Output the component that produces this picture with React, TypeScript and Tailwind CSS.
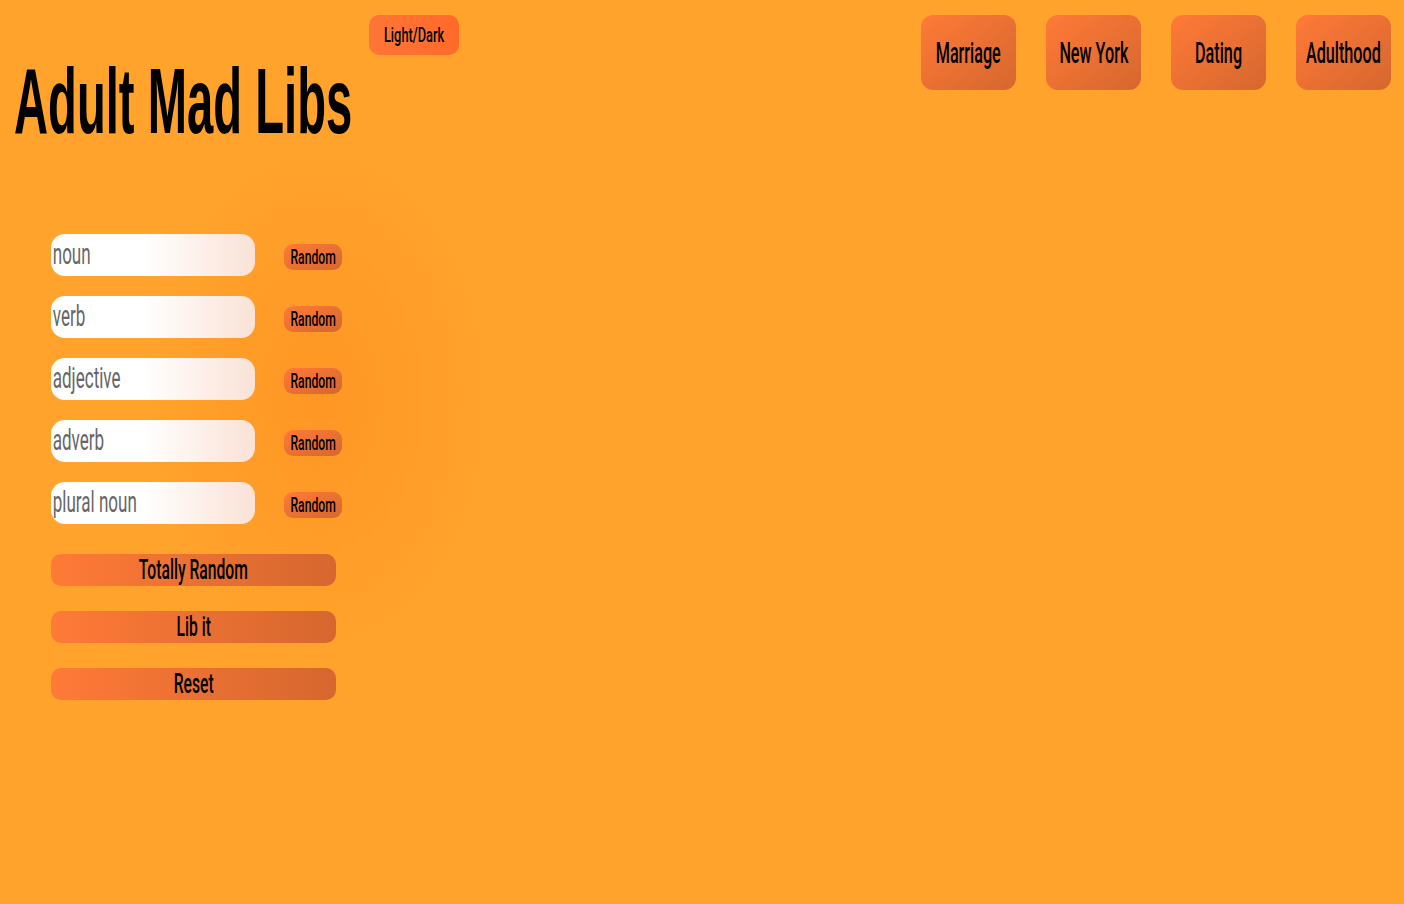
import { useState } from 'react';

const fields = ['noun', 'verb', 'adjective', 'adverb', 'plural noun'];
const stories = ['Marriage', 'New York', 'Dating', 'Adulthood'];
const actions = ['Totally Random', 'Lib it', 'Reset'];

// condensed look: the installed fonts are too wide, so squeeze horizontally
function Squish({ children, className }: { children: React.ReactNode; className: string }) {
  return <span className={`inline-block whitespace-nowrap ${className}`}>{children}</span>;
}

export default function App() {
  const [values, setValues] = useState<string[]>(fields.map(() => ''));

  return (
    <div className="relative min-h-screen h-[904px] overflow-hidden bg-[#ffa32c] text-black font-['Roboto','Liberation_Sans',Arial,sans-serif]">
      {/* soft glow behind the form */}
      <div className="absolute left-[150px] top-[150px] h-[500px] w-[340px] bg-[radial-gradient(closest-side,rgba(255,140,30,0.55),rgba(255,140,30,0.25)_60%,rgba(255,140,30,0))]" />

      <header className="relative flex items-start justify-between">
        <div className="flex items-start pl-[14px]">
          <h1 className="mt-[55px] w-[338px] text-[92px] leading-none font-bold font-['Liberation_Sans',Arial,sans-serif]">
            <Squish className="origin-left scale-x-[0.513]">Adult Mad Libs</Squish>
          </h1>
          <button className="ml-[17px] mt-[15px] flex h-[40px] w-[90px] items-center justify-center overflow-hidden rounded-[10px] bg-gradient-to-r from-[#ff7538] to-[#ff6a28] text-[20px] leading-none font-medium">
            <Squish className="scale-x-[0.64]">Light/Dark</Squish>
          </button>
        </div>
        <nav className="flex gap-[30px] pr-[13px] pt-[15px]">
          {stories.map((s) => (
            <button
              key={s}
              className="flex h-[75px] w-[95px] items-center justify-center overflow-hidden rounded-[12px] bg-gradient-to-br from-[#ff7a37] to-[#d6672f] text-[30px] leading-none font-medium"
            >
              <Squish className="scale-x-[0.54]">{s}</Squish>
            </button>
          ))}
        </nav>
      </header>

      <main className="relative mt-[87px] pl-[51px]">
        <div className="flex flex-col gap-[20px]">
          {fields.map((f, i) => (
            <div key={f} className="flex items-start">
              <div className="relative h-[42px] w-[204px] overflow-hidden rounded-[14px] bg-gradient-to-r from-white from-45% to-[#fae2d6]">
                <input
                  value={values[i]}
                  onChange={(e) => setValues(values.map((v, j) => (j === i ? e.target.value : v)))}
                  className="absolute inset-0 w-[350px] origin-left scale-x-[0.587] bg-transparent pl-[3px] text-[29px] text-[#333] outline-none placeholder:text-[#666]"
                  placeholder={f}
                />
              </div>
              <button className="ml-[29px] mt-[10px] flex h-[26px] w-[58px] items-center justify-center overflow-hidden rounded-[9px] bg-gradient-to-br from-[#ff7a37] to-[#d6672f] text-[21px] leading-none font-medium">
                <Squish className="scale-x-[0.58]">Random</Squish>
              </button>
            </div>
          ))}
        </div>

        <div className="mt-[30px] flex flex-col gap-[25px]">
          {actions.map((a) => (
            <button
              key={a}
              className="flex h-[32px] w-[285px] items-center justify-center overflow-hidden rounded-[10px] bg-gradient-to-r from-[#ff7a37] to-[#d6672f] text-[28px] leading-none font-medium"
            >
              <Squish className="scale-x-[0.56]">{a}</Squish>
            </button>
          ))}
        </div>
      </main>
    </div>
  );
}
